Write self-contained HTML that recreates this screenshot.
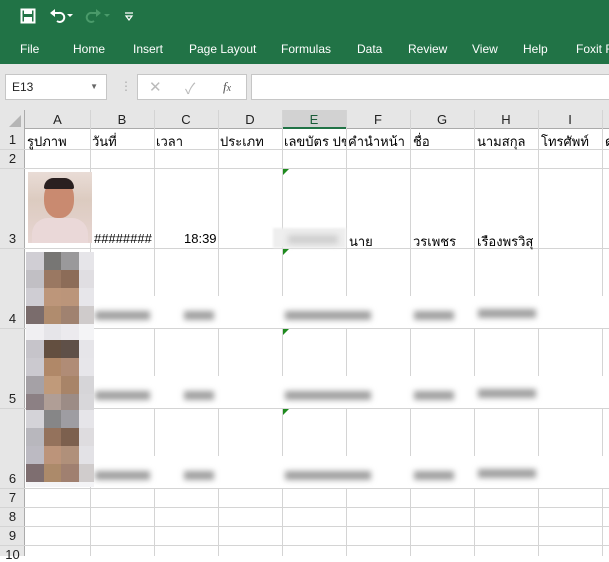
<!DOCTYPE html>
<html><head><meta charset="utf-8"><style>
*{margin:0;padding:0;box-sizing:border-box}
body{width:609px;height:556px;overflow:hidden;background:#fff;font-family:"Liberation Sans","Noto Sans CJK SC",sans-serif;position:relative}
.a{position:absolute}
.tab{position:absolute;top:42px;color:#fff;font-size:12px;white-space:nowrap}
.vl{position:absolute;width:1px;background:#d4d4d4}
.hl{position:absolute;height:1px;background:#d4d4d4}
.ch{position:absolute;top:110px;height:19px;font-size:13px;color:#222;text-align:center;line-height:19px}
.rh{position:absolute;left:0;width:25px;font-size:13px;color:#222;text-align:center}
.t{position:absolute;font-size:13px;color:#000;white-space:nowrap}
.bl{position:absolute;background:#a0a0a0;filter:blur(3px);height:9px}
.px{position:absolute;width:18px;height:18px}
.tri{position:absolute;width:0;height:0;border-top:6px solid #1e8a1e;border-right:6px solid transparent}
</style></head><body>
<div class="a" style="left:0;top:0;width:609px;height:64px;background:#217346"></div>
<svg class="a" style="left:20px;top:8px" width="16" height="16" viewBox="0 0 16 16"><rect x="1.5" y="1.5" width="13" height="13" fill="none" stroke="#fff" stroke-width="2"/><rect x="4" y="2" width="8" height="4" fill="#fff"/><rect x="4" y="9" width="8" height="5" fill="#fff"/></svg>
<svg class="a" style="left:49px;top:8px" width="30" height="16" viewBox="0 0 30 16"><path d="M4 5 H10 A4.5 4.5 0 1 1 8 13" fill="none" stroke="#fff" stroke-width="2"/><path d="M1 5 L6 1 V9 Z" fill="#fff"/><path d="M18 6 L24 6 L21 9Z" fill="#fff"/></svg>
<svg class="a" style="left:84px;top:8px" width="30" height="16" viewBox="0 0 30 16"><path d="M14 5 H8 A4.5 4.5 0 1 0 10 13" fill="none" stroke="#4a9a6a" stroke-width="2"/><path d="M17 5 L12 1 V9 Z" fill="#4a9a6a"/><path d="M20 6 L26 6 L23 9Z" fill="#4a9a6a"/></svg>
<svg class="a" style="left:124px;top:12px" width="10" height="10" viewBox="0 0 10 10"><path d="M1 1H9M2 4L5 8L8 4Z" fill="none" stroke="#fff" stroke-width="1.2"/></svg>
<div class="tab" style="left:20px">File</div>
<div class="tab" style="left:73px">Home</div>
<div class="tab" style="left:133px">Insert</div>
<div class="tab" style="left:189px">Page Layout</div>
<div class="tab" style="left:281px">Formulas</div>
<div class="tab" style="left:357px">Data</div>
<div class="tab" style="left:408px">Review</div>
<div class="tab" style="left:472px">View</div>
<div class="tab" style="left:523px">Help</div>
<div class="tab" style="left:576px">Foxit R</div>
<div class="a" style="left:0;top:64px;width:609px;height:46px;background:#e6e6e6"></div>
<div class="a" style="left:5px;top:74px;width:102px;height:26px;background:#fff;border:1px solid #c6c6c6;font-size:12px;line-height:24px;padding-left:6px;color:#222">E13<span style="position:absolute;right:8px;top:0;font-size:8px;color:#666">▼</span></div>
<div class="a" style="left:120px;top:79px;color:#aaa;font-size:12px">⋮</div>
<div class="a" style="left:137px;top:74px;width:110px;height:26px;background:#fff;border:1px solid #c6c6c6"></div>
<div class="a" style="left:149px;top:78px;color:#bbb;font-size:15px">✕</div>
<div class="a" style="left:185px;top:78px;color:#bbb;font-size:15px">✓</div>
<div class="a" style="left:223px;top:79px;color:#555;font-size:13px;font-style:italic;font-family:'Liberation Serif',serif">f<span style="font-size:10px">x</span></div>
<div class="a" style="left:251px;top:74px;width:370px;height:26px;background:#fff;border:1px solid #c6c6c6"></div>
<div class="a" style="left:0;top:110px;width:609px;height:19px;background:#e6e6e6;border-bottom:1px solid #ababab"></div>
<div class="a" style="left:0;top:110px;width:25px;height:446px;background:#e6e6e6;border-right:1px solid #ababab"></div>
<svg class="a" style="left:9px;top:115px" width="12" height="12"><path d="M12 0V12H0Z" fill="#b5b5b5"/></svg>
<div class="a" style="left:282px;top:110px;width:64px;height:19px;background:#d2d2d2;border-bottom:2px solid #217346"></div>
<div class="ch" style="left:25px;width:65px">A</div>
<div class="ch" style="left:90px;width:64px">B</div>
<div class="ch" style="left:154px;width:64px">C</div>
<div class="ch" style="left:218px;width:64px">D</div>
<div class="ch" style="left:282px;width:64px;color:#1a5c38">E</div>
<div class="ch" style="left:346px;width:64px">F</div>
<div class="ch" style="left:410px;width:64px">G</div>
<div class="ch" style="left:474px;width:64px">H</div>
<div class="ch" style="left:538px;width:64px">I</div>
<div class="vl" style="left:90px;top:110px;height:446px"></div>
<div class="vl" style="left:154px;top:110px;height:446px"></div>
<div class="vl" style="left:218px;top:110px;height:446px"></div>
<div class="vl" style="left:282px;top:110px;height:446px"></div>
<div class="vl" style="left:346px;top:110px;height:446px"></div>
<div class="vl" style="left:410px;top:110px;height:446px"></div>
<div class="vl" style="left:474px;top:110px;height:446px"></div>
<div class="vl" style="left:538px;top:110px;height:446px"></div>
<div class="vl" style="left:602px;top:110px;height:446px"></div>
<div class="hl" style="left:0;top:149px;width:609px"></div>
<div class="hl" style="left:0;top:168px;width:609px"></div>
<div class="hl" style="left:0;top:248px;width:609px"></div>
<div class="hl" style="left:0;top:328px;width:609px"></div>
<div class="hl" style="left:0;top:408px;width:609px"></div>
<div class="hl" style="left:0;top:488px;width:609px"></div>
<div class="hl" style="left:0;top:507px;width:609px"></div>
<div class="hl" style="left:0;top:526px;width:609px"></div>
<div class="hl" style="left:0;top:545px;width:609px"></div>
<div class="rh" style="top:132px">1</div>
<div class="rh" style="top:151px">2</div>
<div class="rh" style="top:231px">3</div>
<div class="rh" style="top:311px">4</div>
<div class="rh" style="top:391px">5</div>
<div class="rh" style="top:471px">6</div>
<div class="rh" style="top:490px">7</div>
<div class="rh" style="top:509px">8</div>
<div class="rh" style="top:528px">9</div>
<div class="rh" style="top:547px">10</div>
<div class="t" style="left:27px;top:131px">รูปภาพ</div>
<div class="t" style="left:92px;top:131px">วันที่</div>
<div class="t" style="left:156px;top:131px">เวลา</div>
<div class="t" style="left:220px;top:131px">ประเภท</div>
<div class="t" style="left:284px;top:131px;width:62px;overflow:hidden">เลขบัตร ปชช</div>
<div class="t" style="left:348px;top:131px">คำนำหน้า</div>
<div class="t" style="left:413px;top:131px">ชื่อ</div>
<div class="t" style="left:477px;top:131px">นามสกุล</div>
<div class="t" style="left:541px;top:131px">โทรศัพท์</div>
<div class="t" style="left:605px;top:131px">ด</div>
<!-- photo -->
<div class="a" style="left:28px;top:172px;width:64px;height:71px;overflow:hidden;background:linear-gradient(#e9dcd6,#dccbc0 40%,#e7d5d2)">
<div class="a" style="left:16px;top:8px;width:30px;height:38px;border-radius:45%;background:#c98a70"></div>
<div class="a" style="left:16px;top:6px;width:30px;height:11px;border-radius:12px 12px 2px 2px;background:#2a2020"></div>
<div class="a" style="left:4px;top:46px;width:56px;height:30px;border-radius:16px 16px 0 0;background:#ead8d8"></div>
</div>
<div class="t" style="left:94px;top:231px">########</div>
<div class="t" style="left:184px;top:231px">18:39</div>
<div class="a" style="left:273px;top:228px;width:73px;height:20px;background:#eee;filter:blur(1px)"></div>
<div class="bl" style="left:288px;top:235px;width:50px;background:#cfcfcf"></div>
<div class="t" style="left:349px;top:231px">นาย</div>
<div class="t" style="left:413px;top:231px">วรเพชร</div>
<div class="t" style="left:477px;top:231px">เรืองพรวิสุ</div>
<div class="tri" style="left:283px;top:169px"></div>
<div class="tri" style="left:283px;top:249px"></div>
<div class="tri" style="left:283px;top:329px"></div>
<div class="tri" style="left:283px;top:409px"></div>
<div class="a" style="left:94px;top:296px;width:515px;height:32px;background:#fff"></div>
<div class="a" style="left:94px;top:376px;width:515px;height:32px;background:#fff"></div>
<div class="a" style="left:94px;top:456px;width:515px;height:32px;background:#fff"></div>
<div class="bl" style="left:95px;top:311px;width:55px"></div><div class="bl" style="left:184px;top:311px;width:30px"></div><div class="bl" style="left:285px;top:311px;width:86px"></div><div class="bl" style="left:414px;top:311px;width:40px"></div><div class="bl" style="left:478px;top:309px;width:58px"></div>
<div class="bl" style="left:95px;top:391px;width:55px"></div><div class="bl" style="left:184px;top:391px;width:30px"></div><div class="bl" style="left:285px;top:391px;width:86px"></div><div class="bl" style="left:414px;top:391px;width:40px"></div><div class="bl" style="left:478px;top:389px;width:58px"></div>
<div class="bl" style="left:95px;top:471px;width:55px"></div><div class="bl" style="left:184px;top:471px;width:30px"></div><div class="bl" style="left:285px;top:471px;width:86px"></div><div class="bl" style="left:414px;top:471px;width:40px"></div><div class="bl" style="left:478px;top:469px;width:58px"></div>
<!-- pixels -->
<div class="px" style="left:26px;top:252px;background:#d0ced4"></div><div class="px" style="left:44px;top:252px;background:#777674"></div><div class="px" style="left:61px;top:252px;background:#9a999b"></div><div class="px" style="left:79px;top:252px;width:15px;background:#e6e5e9"></div>
<div class="px" style="left:26px;top:270px;background:#c1bfc4"></div><div class="px" style="left:44px;top:270px;background:#9a7862"></div><div class="px" style="left:61px;top:270px;background:#8c6c58"></div><div class="px" style="left:79px;top:270px;width:15px;background:#e0dee2"></div>
<div class="px" style="left:26px;top:288px;background:#cfcdd3"></div><div class="px" style="left:44px;top:288px;background:#bd967a"></div><div class="px" style="left:61px;top:288px;background:#bb957a"></div><div class="px" style="left:79px;top:288px;width:15px;background:#e7e6ea"></div>
<div class="px" style="left:26px;top:306px;background:#7a6c6c"></div><div class="px" style="left:44px;top:306px;background:#b08c6e"></div><div class="px" style="left:61px;top:306px;background:#a08270"></div><div class="px" style="left:79px;top:306px;width:15px;background:#cfcbcb"></div>
<div class="px" style="left:26px;top:324px;height:16px;background:#f0eff2"></div><div class="px" style="left:44px;top:324px;height:16px;background:#e6e5e9"></div><div class="px" style="left:61px;top:324px;height:16px;background:#eceaee"></div><div class="px" style="left:79px;top:324px;height:16px;width:15px;background:#f4f4f6"></div>
<div class="px" style="left:26px;top:340px;background:#c6c4ca"></div><div class="px" style="left:44px;top:340px;background:#634f40"></div><div class="px" style="left:61px;top:340px;background:#5f5048"></div><div class="px" style="left:79px;top:340px;width:15px;background:#e6e5e9"></div>
<div class="px" style="left:26px;top:358px;background:#cbc9cf"></div><div class="px" style="left:44px;top:358px;background:#b08868"></div><div class="px" style="left:61px;top:358px;background:#b08c76"></div><div class="px" style="left:79px;top:358px;width:15px;background:#e7e6ea"></div>
<div class="px" style="left:26px;top:376px;background:#a5a1a6"></div><div class="px" style="left:44px;top:376px;background:#c09a7a"></div><div class="px" style="left:61px;top:376px;background:#a88468"></div><div class="px" style="left:79px;top:376px;width:15px;background:#d6d5d8"></div>
<div class="px" style="left:26px;top:394px;background:#8c8084"></div><div class="px" style="left:44px;top:394px;background:#b09e96"></div><div class="px" style="left:61px;top:394px;background:#9c8c86"></div><div class="px" style="left:79px;top:394px;width:15px;background:#d8d7da"></div>
<div class="px" style="left:26px;top:410px;background:#d4d3d8"></div><div class="px" style="left:44px;top:410px;background:#868687"></div><div class="px" style="left:61px;top:410px;background:#9e9da2"></div><div class="px" style="left:79px;top:410px;width:15px;background:#e6e5e9"></div>
<div class="px" style="left:26px;top:428px;background:#b8b7bd"></div><div class="px" style="left:44px;top:428px;background:#94725c"></div><div class="px" style="left:61px;top:428px;background:#7c604e"></div><div class="px" style="left:79px;top:428px;width:15px;background:#dedcdf"></div>
<div class="px" style="left:26px;top:446px;background:#bcbac2"></div><div class="px" style="left:44px;top:446px;background:#bc947a"></div><div class="px" style="left:61px;top:446px;background:#b0907a"></div><div class="px" style="left:79px;top:446px;width:15px;background:#e3e2e6"></div>
<div class="px" style="left:26px;top:464px;background:#7e6e70"></div><div class="px" style="left:44px;top:464px;background:#ac8a6a"></div><div class="px" style="left:61px;top:464px;background:#a08070"></div><div class="px" style="left:79px;top:464px;width:15px;background:#d0cccc"></div>
<div class="px" style="left:26px;top:482px;height:5px;background:#f4f4f6;width:68px"></div>
</body></html>
